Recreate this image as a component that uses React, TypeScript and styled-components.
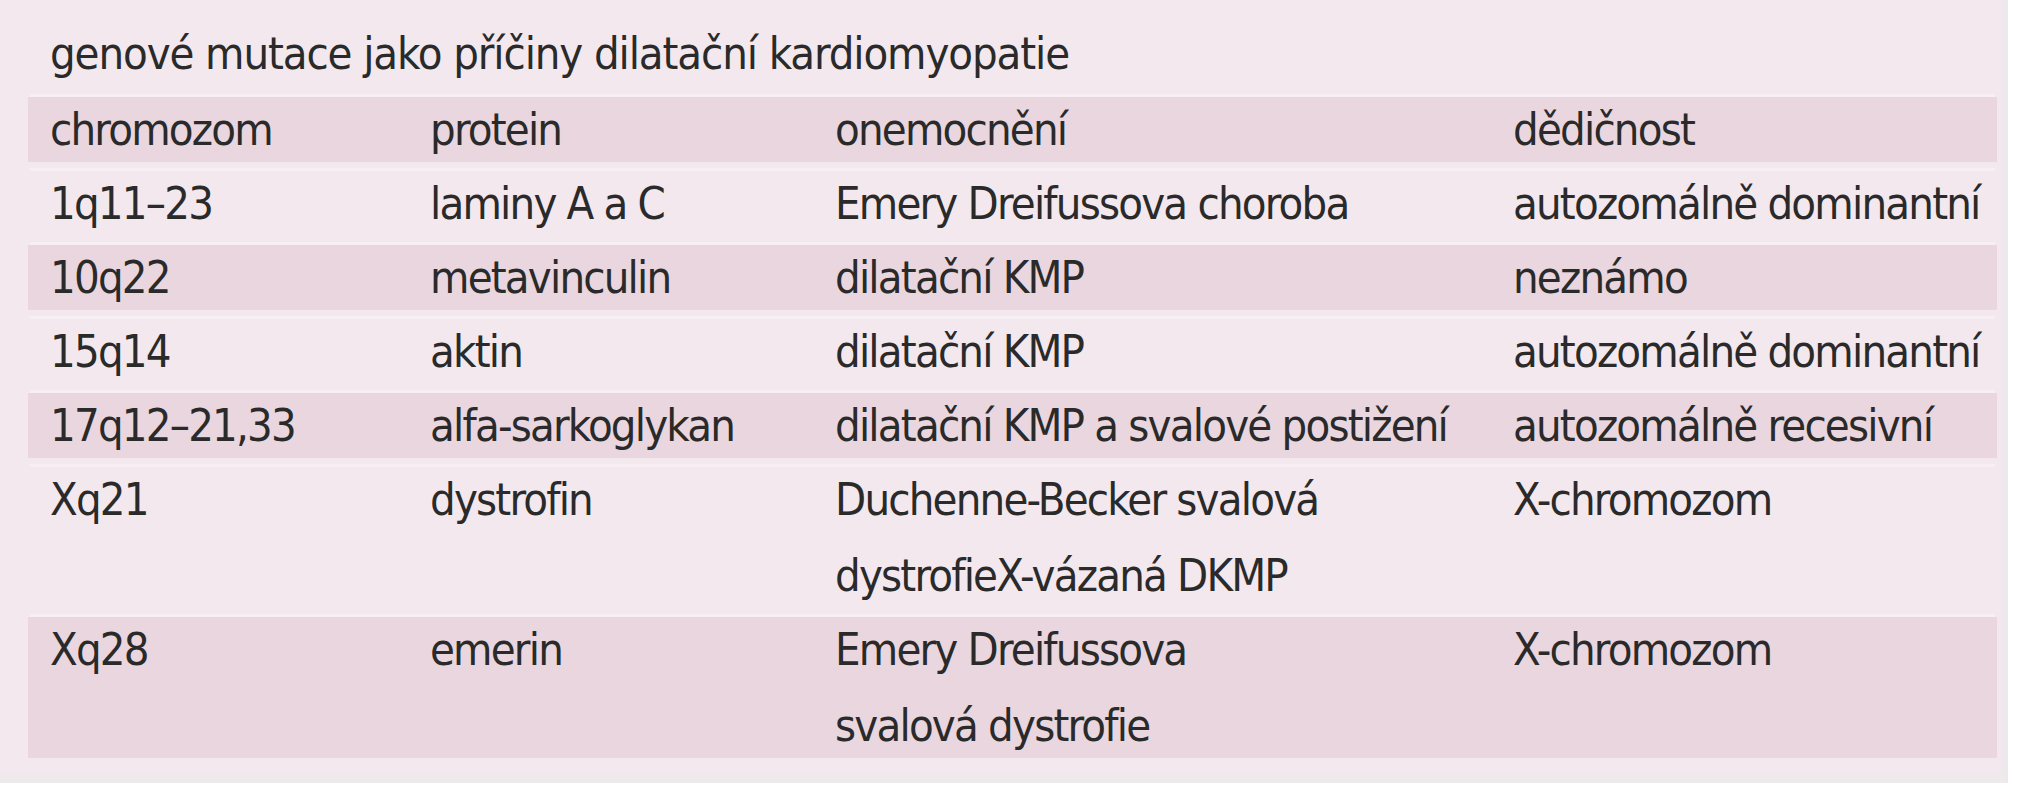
import styled, { createGlobalStyle } from "styled-components";

const GlobalStyle = createGlobalStyle`
  html, body {
    margin: 0;
    padding: 0;
    background: #ffffff;
  }
`;

const Panel = styled.div`
  width: 2008px;
  height: 783px;
  box-sizing: border-box;
  background: #f3e8ee;
  border-right: 7px solid #ede8eb;
  border-bottom: 10px solid #eeeaec;
  padding: 0 0 0 28px;
  font-family: "DejaVu Sans Condensed", "Liberation Sans", sans-serif;
  font-size: 45px;
  letter-spacing: -1.8px;
  color: #2a2a2a;
`;

const Title = styled.h1`
  margin: 0;
  padding: 24px 0 13px 22px;
  font-size: 45px;
  font-weight: 400;
  line-height: 60px;
  letter-spacing: -1.1px;
  white-space: nowrap;
`;

const Table = styled.div`
  width: 1969px;
  display: flex;
  flex-direction: column;
  gap: 9px;
`;

const Row = styled.div<{ $band: boolean }>`
  display: grid;
  grid-template-columns: 380px 405px 678px 1fr;
  background: ${(p) => (p.$band ? "#e9d6df" : "#f3e8ee")};
  box-shadow: 0 -5px 0 -2px #f7eff3;
`;

const Cell = styled.div`
  padding-left: 22px;
  margin: -5.5px 0;
  line-height: 76px;
  white-space: nowrap;
`;

const header = ["chromozom", "protein", "onemocnění", "dědičnost"];

const rows: string[][] = [
  ["1q11–23", "laminy A a C", "Emery Dreifussova choroba", "autozomálně dominantní"],
  ["10q22", "metavinculin", "dilatační KMP", "neznámo"],
  ["15q14", "aktin", "dilatační KMP", "autozomálně dominantní"],
  ["17q12–21,33", "alfa-sarkoglykan", "dilatační KMP a svalové postižení", "autozomálně recesivní"],
  ["Xq21", "dystrofin", "Duchenne-Becker svalová\ndystrofieX-vázaná DKMP", "X-chromozom"],
  ["Xq28", "emerin", "Emery Dreifussova\nsvalová dystrofie", "X-chromozom"],
];

function renderText(text: string) {
  const parts = text.split("\n");
  return parts.map((part, i) => (
    <span key={i}>
      {part}
      {i < parts.length - 1 && <br />}
    </span>
  ));
}

export default function App() {
  return (
    <>
      <GlobalStyle />
      <Panel>
        <Title>genové mutace jako příčiny dilatační kardiomyopatie</Title>
        <Table>
          <Row $band>
            {header.map((h) => (
              <Cell key={h}>{h}</Cell>
            ))}
          </Row>
          {rows.map((row, index) => (
            <Row key={row[0]} $band={index % 2 === 1}>
              {row.map((cell, i) => (
                <Cell key={i}>{renderText(cell)}</Cell>
              ))}
            </Row>
          ))}
        </Table>
      </Panel>
    </>
  );
}
